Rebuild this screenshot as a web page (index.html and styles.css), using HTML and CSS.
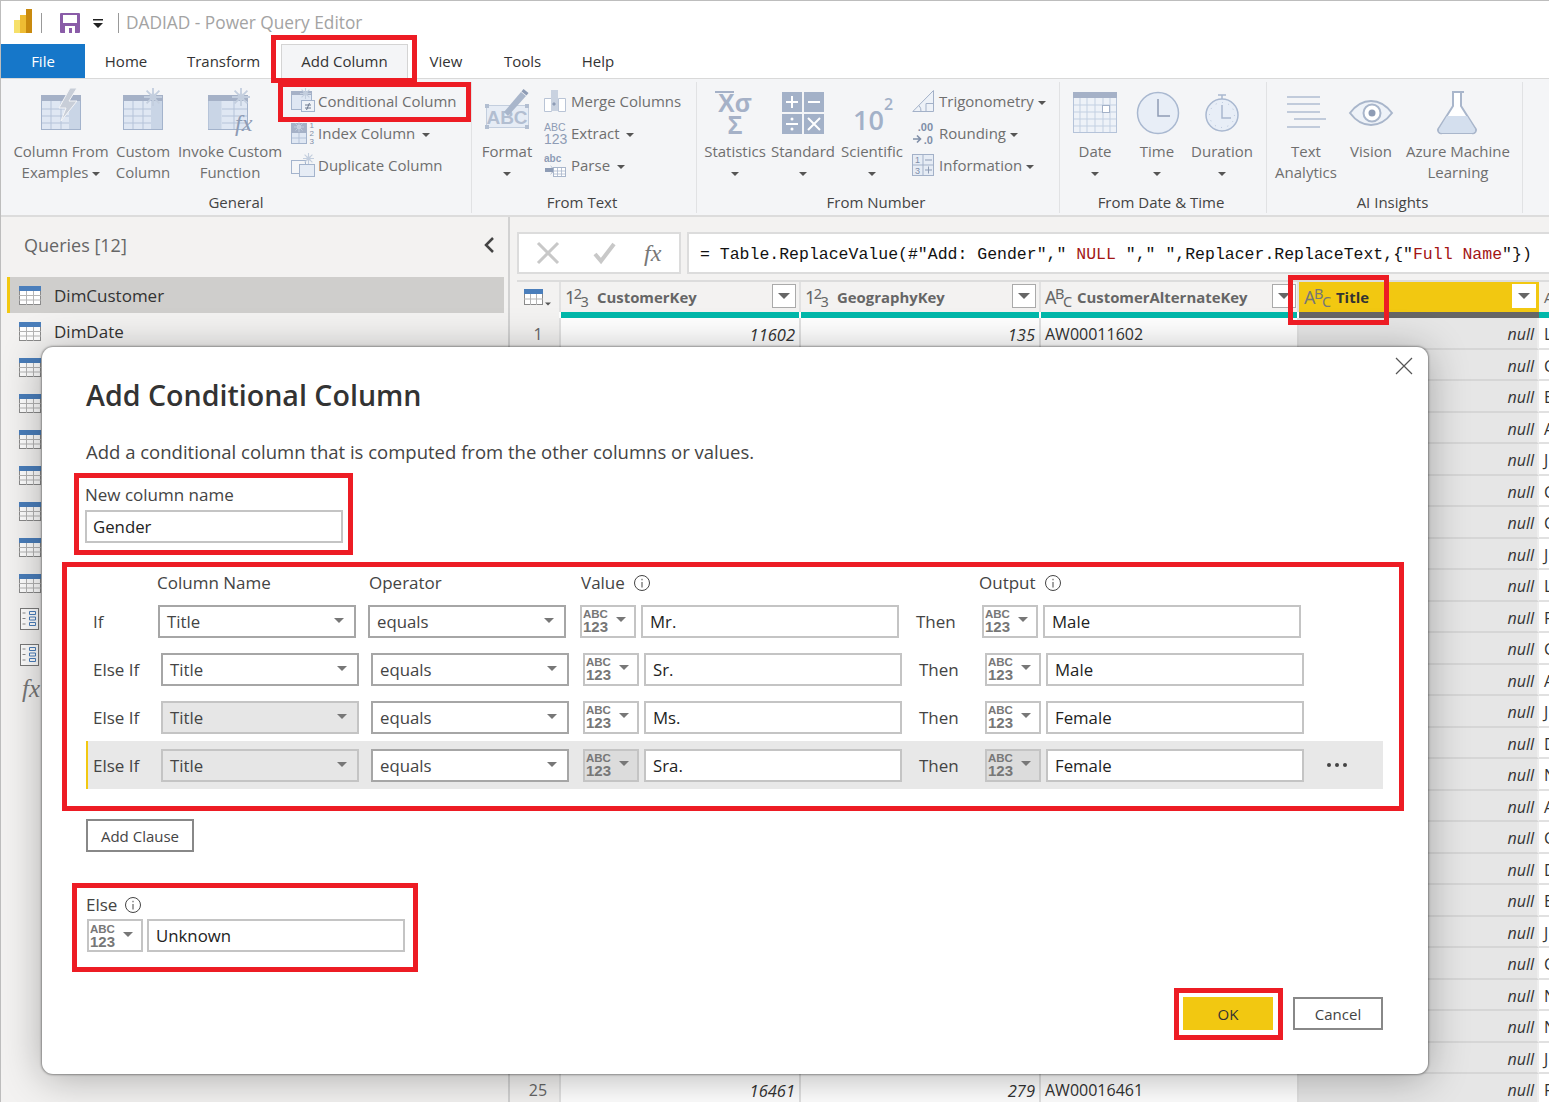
FILE: index.html
```html
<!DOCTYPE html>
<html lang="en">
<head>
  <meta charset="UTF-8" />
  <title>DADIAD - Power Query Editor</title>
  <link rel="stylesheet" href="styles.css">
</head>
<body>
<svg class="defs" width="0" height="0">
  <defs>
    <symbol id="star" viewBox="0 0 18 18">
      <circle cx="9" cy="9" r="3.2" fill="#fff" stroke="#c3cede"/>
      <path d="M9 0v18M0 9h18M2.6 2.6l12.8 12.8M15.4 2.6L2.6 15.4" stroke="#c3cede" stroke-width="1.8"/>
    </symbol>
    <symbol id="query-table" viewBox="0 0 22 19">
      <rect x=".5" y=".5" width="21" height="18" fill="#fff" stroke="#8a8a8a"/>
      <rect width="22" height="5" fill="#4a7ebb"/>
      <path d="M0 9.5h22M0 14h22M7.5 5v14M14.5 5v14" stroke="#b5b5b5"/>
    </symbol>
    <symbol id="query-param" viewBox="0 0 19 22">
      <rect x=".5" y=".5" width="18" height="21" fill="#fff" stroke="#7a7a7a"/>
      <path d="M2.500 5h3M2.500 10.500h3M2.500 16h3" stroke="#8a8a8a"/>
      <path d="M9.500 3.500h6v3h-6zM9.500 9h6v3h-6zM9.500 14.500h6v3h-6z" fill="#fff" stroke="#4a7ebb"/>
    </symbol>
    <symbol id="info" viewBox="0 0 18 18">
      <circle cx="9" cy="9" r="7.500" fill="none" stroke="#444"/>
      <path d="M9 8v5.500M9 4.800v1.500" stroke="#444"/>
    </symbol>
  </defs>
</svg>

<div class="page">
  <div class="titlebar">
    <svg class="logo" width="18" height="24" viewBox="0 0 18 24">
      <rect y="11" width="7" height="13" fill="#f6e06a"/>
      <rect x="6" y="6" width="7" height="18" fill="#eebc33"/>
      <rect x="12" width="6" height="24" fill="#c98a0e"/>
    </svg>
    <span class="title-sep"></span>
    <svg class="save" width="20" height="20" viewBox="0 0 20 20">
      <path d="M1 0h18a1 1 0 0 1 1 1v18a1 1 0 0 1-1 1H1a1 1 0 0 1-1-1V1a1 1 0 0 1 1-1z" fill="#8a5ca8"/>
      <rect x="3" y="2" width="14" height="8" fill="#fff"/>
      <rect x="5" y="13" width="10" height="7" fill="#fff"/>
      <rect x="9" y="15" width="3" height="5" fill="#8a5ca8"/>
    </svg>
    <svg class="qat-drop" width="10" height="10" viewBox="0 0 10 10"><path d="M0 0h10v1.500H0zM0 4h10L5 9z" fill="#222"/></svg>
    <span class="title-sep title-sep-2"></span>
    <span class="app-title">DADIAD - Power Query Editor</span>
  </div>

  <div class="tabs">
    <span class="tab tab-file">File</span>
    <span class="tab tab-home">Home</span>
    <span class="tab tab-transform">Transform</span>
    <span class="tab tab-active">Add Column</span>
    <span class="tab tab-view">View</span>
    <span class="tab tab-tools">Tools</span>
    <span class="tab tab-help">Help</span>
  </div>

  <div class="ribbon">
    <div class="group group-general">
      <div class="group-items">
        <div class="big-btn w-examples">
          <svg class="big-icon" width="48" height="48" viewBox="0 0 48 48">
            <rect x="4.500" y="9.500" width="39" height="34" fill="#dfe7f3" stroke="#a3b3cc"/>
            <rect x="32" y="10" width="11" height="33" fill="#c9d5e6"/>
            <rect x="4" y="9" width="40" height="6" fill="#a5b1c7"/>
            <path d="M5 23h27M5 30h27M5 37h27M14 15v28M24 15v28" stroke="#b5c3d9"/>
            <path d="M33 2L22 22h7l-5 13 16-20h-8l8-13z" fill="#c8ced8" stroke="#f4f5f7"/>
          </svg>
          <span class="big-label">Column From<br>Examples <i class="caret"></i></span>
        </div>
        <div class="big-btn w-custom">
          <svg class="big-icon" width="48" height="48" viewBox="0 0 48 48">
            <rect x="4.500" y="9.500" width="39" height="34" fill="#dfe7f3" stroke="#a3b3cc"/>
            <rect x="32" y="10" width="11" height="33" fill="#c9d5e6"/>
            <rect x="4" y="9" width="40" height="6" fill="#a5b1c7"/>
            <path d="M5 23h27M5 30h27M5 37h27M14 15v28M24 15v28" stroke="#b5c3d9"/>
            <use href="#star" x="25" y="2" width="18" height="18"/>
          </svg>
          <span class="big-label">Custom<br>Column</span>
        </div>
        <div class="big-btn w-invoke">
          <svg class="big-icon" width="48" height="48" viewBox="0 0 48 48">
            <rect x="2.500" y="9.500" width="39" height="34" fill="#dfe7f3" stroke="#a3b3cc"/>
            <rect x="2.500" y="15" width="13" height="28" fill="#c9d5e6"/>
            <rect x="2" y="9" width="40" height="6" fill="#a5b1c7"/>
            <path d="M16 23h25M16 30h25M16 37h25M28 15v28" stroke="#b5c3d9"/>
            <use href="#star" x="26" y="2" width="18" height="18"/>
            <text class="fx-glyph" x="29" y="45">fx</text>
          </svg>
          <span class="big-label">Invoke Custom<br>Function</span>
        </div>
        <div class="small-col small-general">
          <div class="small-btn">
            <svg width="24" height="26" viewBox="0 0 24 26">
              <rect x=".5" y="3.500" width="20" height="18" fill="#dfe7f3" stroke="#a3b3cc"/>
              <rect y="3" width="21" height="4" fill="#a5b1c7"/>
              <use href="#star" x="9" y="0" width="11" height="11"/>
              <rect x="10.500" y="12.500" width="13" height="11" fill="#eef2f8" stroke="#a3b3cc"/>
              <path d="M14 17h6M14 20h6M18.500 15l-3 7" stroke="#6d7a90"/>
            </svg>
            <span>Conditional Column</span>
          </div>
          <div class="small-btn">
            <svg width="24" height="26" viewBox="0 0 24 26">
              <rect x=".5" y="3.500" width="15" height="20" fill="#dfe7f3" stroke="#a3b3cc"/>
              <rect y="3" width="16" height="10" fill="#a5b1c7"/>
              <use href="#star" x="3" y="2" width="10" height="10"/>
              <path d="M1 18h14M8 13v10" stroke="#b5c3d9"/>
              <text class="index-num" x="18.500" y="8">1</text>
              <text class="index-num" x="18.500" y="16">2</text>
              <text class="index-num" x="18.500" y="24">3</text>
            </svg>
            <span>Index Column <i class="caret caret-gap"></i></span>
          </div>
          <div class="small-btn">
            <svg width="24" height="26" viewBox="0 0 24 26">
              <rect x=".5" y="8.500" width="14" height="13" fill="none" stroke="#a3b3cc"/>
              <rect x="8.500" y="12.500" width="15" height="12" fill="#e6ecf5" stroke="#a3b3cc"/>
              <use href="#star" x="12" y="1" width="11" height="11"/>
            </svg>
            <span>Duplicate Column</span>
          </div>
        </div>
      </div>
      <div class="group-label">General</div>
    </div>

    <div class="group group-text">
      <div class="group-items">
        <div class="big-btn w-format">
          <svg class="big-icon" width="48" height="48" viewBox="0 0 48 48">
            <rect x="3.500" y="19.500" width="42" height="22" fill="#e6ecf5" stroke="#c3cede"/>
            <path d="M2 18h4v4H2zM42 18h4v4h-4zM2 39h4v4H2zM42 39h4v4h-4z" fill="#b2bed1"/>
            <text class="format-abc" x="24" y="38">ABC</text>
            <path d="M21 26L38 6l5 4-18 20z" fill="#a9b6cb"/>
            <path d="M38.500 5.500l2-2.500 5 4-2 2.500z" fill="#8e9cb5"/>
          </svg>
          <span class="big-label">Format<br><i class="caret"></i></span>
        </div>
        <div class="small-col small-text">
          <div class="small-btn">
            <svg width="22" height="24" viewBox="0 0 22 24">
              <path d="M.5 9.500h7v13h-7zM14.500 9.500h7v13h-7z" fill="#fff" stroke="#b9c4d6"/>
              <rect x="7" y="1" width="7" height="21" fill="#c9d2e0"/>
              <path d="M8 15l2 2 2-2-2-2z" fill="#8e9cb5"/>
            </svg>
            <span>Merge Columns</span>
          </div>
          <div class="small-btn">
            <span class="type-glyph ribbon-abc"><b>ABC</b><b class="num">123</b></span>
            <span>Extract <i class="caret caret-gap"></i></span>
          </div>
          <div class="small-btn">
            <svg width="22" height="24" viewBox="0 0 22 24">
              <text class="parse-abc" x="0" y="9">abc</text>
              <path d="M1 15h7l-2-3 5 5-5 5 2-3H1z" fill="#8e9cb5"/>
              <rect x="9.500" y="14.500" width="12" height="9" fill="#fff" stroke="#a9b6cb"/>
              <path d="M9.500 18h12M9.500 21h12M13.500 14.500v9M17.500 14.500v9" stroke="#a9b6cb" stroke-width=".8"/>
            </svg>
            <span>Parse <i class="caret caret-gap"></i></span>
          </div>
        </div>
      </div>
      <div class="group-label">From Text</div>
    </div>

    <div class="group group-number">
      <div class="group-items">
        <div class="big-btn w-stats">
          <svg class="big-icon" width="48" height="48" viewBox="0 0 48 48">
            <path d="M4 6h19" stroke="#a5b1c7" stroke-width="2"/>
            <text class="stat-glyph" x="24" y="26">Xσ</text>
            <text class="stat-glyph" x="24" y="48">Σ</text>
          </svg>
          <span class="big-label">Statistics<br><i class="caret"></i></span>
        </div>
        <div class="big-btn w-standard">
          <svg class="big-icon" width="48" height="48" viewBox="0 0 48 48">
            <path d="M3 6h20v20H3zM25 6h20v20H25zM3 28h20v20H3zM25 28h20v20H25z" fill="#a3b1c8"/>
            <path d="M7 16h12M13 10v12M29 16h12M7 38h12M29 32l12 12M41 32L29 44" stroke="#fff" stroke-width="2"/>
            <circle cx="13" cy="33" r="1.500" fill="#fff"/><circle cx="13" cy="43" r="1.500" fill="#fff"/>
          </svg>
          <span class="big-label">Standard<br><i class="caret"></i></span>
        </div>
        <div class="big-btn w-sci">
          <svg class="big-icon" width="48" height="48" viewBox="0 0 48 48">
            <text class="sci-ten" x="5" y="44">10</text>
            <text class="sci-two" x="36" y="24">2</text>
          </svg>
          <span class="big-label">Scientific<br><i class="caret"></i></span>
        </div>
        <div class="small-col small-number">
          <div class="small-btn">
            <svg width="22" height="24" viewBox="0 0 22 24">
              <path d="M21.500 1.500v21H.8z" fill="#eef2f8" stroke="#a3b1c8"/>
              <path d="M14 22.500v-8h7.500M9 22.500a8 8 0 0 0-2-6" fill="none" stroke="#a3b1c8"/>
            </svg>
            <span>Trigonometry <i class="caret"></i></span>
          </div>
          <div class="small-btn">
            <svg width="22" height="24" viewBox="0 0 22 24">
              <text class="round-num" x="21" y="10">.00</text>
              <text class="round-num" x="21" y="23">.0</text>
              <path d="M1 18h7M5 14.500l3.500 3.500L5 21.500" fill="none" stroke="#7f8ea8" stroke-width="1.600"/>
            </svg>
            <span>Rounding <i class="caret"></i></span>
          </div>
          <div class="small-btn">
            <svg width="22" height="24" viewBox="0 0 22 24">
              <rect x=".5" y="1.500" width="21" height="21" fill="#e6ecf5" stroke="#a3b1c8"/>
              <path d="M11 1.500v21M.5 12h21" stroke="#a3b1c8"/>
              <text class="info-num" x="5.500" y="10">1</text>
              <text class="info-num" x="5.500" y="21">3</text>
              <path d="M13 7h7M13 17h7M16.500 13.500v7" stroke="#8e9cb5"/>
            </svg>
            <span>Information <i class="caret"></i></span>
          </div>
        </div>
      </div>
      <div class="group-label">From Number</div>
    </div>

    <div class="group group-date">
      <div class="group-items">
        <div class="big-btn w-date">
          <svg class="big-icon" width="48" height="48" viewBox="0 0 48 48">
            <rect x="2.500" y="6.500" width="43" height="40" fill="#eef2f8" stroke="#b5c3d9"/>
            <rect x="2" y="6" width="44" height="6" fill="#a5b1c7"/>
            <path d="M9 12v34M16 12v34M24 12v34M32 12v34M39 12v34M3 19h42M3 26h42M3 33h42M3 40h42" stroke="#c3d0e2"/>
            <rect x="31.500" y="19.500" width="7" height="7" fill="#fff" stroke="#a3b1c8"/>
          </svg>
          <span class="big-label">Date<br><i class="caret"></i></span>
        </div>
        <div class="big-btn w-time">
          <svg class="big-icon" width="48" height="48" viewBox="0 0 48 48">
            <circle cx="25" cy="27" r="20.500" fill="#e8eef7" stroke="#a9b8d0" stroke-width="1.500"/>
            <path d="M25 13v17h12" fill="none" stroke="#8e9cb5" stroke-width="1.500"/>
          </svg>
          <span class="big-label">Time<br><i class="caret"></i></span>
        </div>
        <div class="big-btn w-duration">
          <svg class="big-icon" width="48" height="48" viewBox="0 0 48 48">
            <circle cx="24" cy="29" r="16" fill="#e8eef7" stroke="#a9b8d0" stroke-width="1.500"/>
            <path d="M20 9h8M24 9v4M24 19v13h9" fill="none" stroke="#a9b8d0" stroke-width="1.500"/>
            <circle cx="24" cy="29" r="12.500" fill="none" stroke="#b5c3d9" stroke-dasharray="1 5.500"/>
          </svg>
          <span class="big-label">Duration<br><i class="caret"></i></span>
        </div>
      </div>
      <div class="group-label">From Date &amp; Time</div>
    </div>

    <div class="group group-ai">
      <div class="group-items">
        <div class="big-btn w-analytics">
          <svg class="big-icon" width="48" height="48" viewBox="0 0 48 48">
            <path d="M5 11h33M5 18h33M5 26h33M12 33h32M5 41h33" fill="none" stroke="#b0bdd2" stroke-width="1.500"/>
          </svg>
          <span class="big-label">Text<br>Analytics</span>
        </div>
        <div class="big-btn w-vision">
          <svg class="big-icon" width="48" height="48" viewBox="0 0 48 48">
            <path d="M3 27c6-8 13-12 21-12s15 4 21 12c-6 8-13 12-21 12s-15-4-21-12z" fill="#eef2f8" stroke="#a9b6cb" stroke-width="2"/>
            <circle cx="25" cy="27" r="8.500" fill="#fff" stroke="#a9b6cb" stroke-width="2"/>
            <circle cx="25" cy="27" r="3.500" fill="#8e9cb5"/>
          </svg>
          <span class="big-label">Vision</span>
        </div>
        <div class="big-btn w-azure">
          <svg class="big-icon" width="48" height="48" viewBox="0 0 48 48">
            <path d="M18 6h12M19 6v14L5 42a3 3 0 0 0 3 5h30a3 3 0 0 0 3-5L27 20V6" fill="#fff" stroke="#a9b6cb" stroke-width="2"/>
            <path d="M13 30h20l8 13a3 3 0 0 1-3 4H8a3 3 0 0 1-3-4z" fill="#d4dfee"/>
          </svg>
          <span class="big-label">Azure Machine<br>Learning</span>
        </div>
      </div>
      <div class="group-label">AI Insights</div>
    </div>
  </div>

  <div class="main">
    <div class="queries">
      <div class="queries-head">
        <span>Queries [12]</span>
        <svg width="12" height="16" viewBox="0 0 12 16"><path d="M10 1L3 8l7 7" fill="none" stroke="#444" stroke-width="2.500"/></svg>
      </div>
      <div class="query query-selected"><svg width="22" height="19"><use href="#query-table"/></svg><span>DimCustomer</span></div>
      <div class="query"><svg width="22" height="19"><use href="#query-table"/></svg><span>DimDate</span></div>
      <div class="query"><svg width="22" height="19"><use href="#query-table"/></svg></div>
      <div class="query"><svg width="22" height="19"><use href="#query-table"/></svg></div>
      <div class="query"><svg width="22" height="19"><use href="#query-table"/></svg></div>
      <div class="query"><svg width="22" height="19"><use href="#query-table"/></svg></div>
      <div class="query"><svg width="22" height="19"><use href="#query-table"/></svg></div>
      <div class="query"><svg width="22" height="19"><use href="#query-table"/></svg></div>
      <div class="query"><svg width="22" height="19"><use href="#query-table"/></svg></div>
      <div class="query query-param"><svg width="19" height="22"><use href="#query-param"/></svg></div>
      <div class="query query-param"><svg width="19" height="22"><use href="#query-param"/></svg></div>
      <div class="query query-fx"><span>fx</span></div>
    </div>

    <div class="data">
      <div class="formula-row">
        <div class="formula-btns">
          <svg width="24" height="24" viewBox="0 0 24 24"><path d="M2 2l20 20M22 2L2 22" stroke="#c8c8c8" stroke-width="3"/></svg>
          <svg width="24" height="24" viewBox="0 0 24 24"><path d="M3 13l6 7L22 3" fill="none" stroke="#c8c8c8" stroke-width="4"/></svg>
          <span class="formula-fx">fx</span>
        </div>
        <div class="formula">= Table.ReplaceValue(#"Add: Gender","<em> NULL </em>"," ",Replacer.ReplaceText,{"<em>Full Name</em>"})</div>
      </div>

      <div class="grid-head">
        <div class="col-head corner">
          <svg width="27" height="17" viewBox="0 0 27 17">
            <rect x=".5" y=".5" width="18" height="15" fill="#fff" stroke="#8a8a8a"/>
            <rect width="19" height="5" fill="#4a7ebb"/>
            <path d="M0 10h19M6.500 5v11M12.500 5v11" stroke="#b5b5b5"/>
            <path d="M21 13.500h6l-3 3z" fill="#555"/>
          </svg>
        </div>
        <div class="col-head">
          <span class="col-type">1<sup>2</sup><sub>3</sub></span><b>CustomerKey</b><span class="col-filter"><i class="caret"></i></span>
        </div>
        <div class="col-head">
          <span class="col-type">1<sup>2</sup><sub>3</sub></span><b>GeographyKey</b><span class="col-filter"><i class="caret"></i></span>
        </div>
        <div class="col-head col-alt">
          <span class="col-type">A<sup>B</sup><sub>C</sub></span><b>CustomerAlternateKey</b><span class="col-filter"><i class="caret"></i></span>
        </div>
        <div class="col-head col-selected">
          <span class="col-type">A<sup>B</sup><sub>C</sub></span><b>Title</b><span class="col-filter"><i class="caret"></i></span>
        </div>
        <div class="col-head col-last">A</div>
      </div>
      <div class="quality">
        <span></span><span class="teal"></span><span class="teal"></span><span class="teal"></span><span class="dark"></span><span class="teal"></span>
      </div>

      <div class="row"><span class="num">1</span><span class="n">11602</span><span class="n">135</span><span class="t">AW00011602</span><span class="n shaded">null</span><span class="t">L</span></div>
      <div class="row"><span class="num"></span><span class="n"></span><span class="n"></span><span class="t"></span><span class="n shaded">null</span><span class="t">C</span></div>
      <div class="row"><span class="num"></span><span class="n"></span><span class="n"></span><span class="t"></span><span class="n shaded">null</span><span class="t">E</span></div>
      <div class="row"><span class="num"></span><span class="n"></span><span class="n"></span><span class="t"></span><span class="n shaded">null</span><span class="t">A</span></div>
      <div class="row"><span class="num"></span><span class="n"></span><span class="n"></span><span class="t"></span><span class="n shaded">null</span><span class="t">J</span></div>
      <div class="row"><span class="num"></span><span class="n"></span><span class="n"></span><span class="t"></span><span class="n shaded">null</span><span class="t">C</span></div>
      <div class="row"><span class="num"></span><span class="n"></span><span class="n"></span><span class="t"></span><span class="n shaded">null</span><span class="t">C</span></div>
      <div class="row"><span class="num"></span><span class="n"></span><span class="n"></span><span class="t"></span><span class="n shaded">null</span><span class="t">J</span></div>
      <div class="row"><span class="num"></span><span class="n"></span><span class="n"></span><span class="t"></span><span class="n shaded">null</span><span class="t">L</span></div>
      <div class="row"><span class="num"></span><span class="n"></span><span class="n"></span><span class="t"></span><span class="n shaded">null</span><span class="t">F</span></div>
      <div class="row"><span class="num"></span><span class="n"></span><span class="n"></span><span class="t"></span><span class="n shaded">null</span><span class="t">C</span></div>
      <div class="row"><span class="num"></span><span class="n"></span><span class="n"></span><span class="t"></span><span class="n shaded">null</span><span class="t">A</span></div>
      <div class="row"><span class="num"></span><span class="n"></span><span class="n"></span><span class="t"></span><span class="n shaded">null</span><span class="t">J</span></div>
      <div class="row"><span class="num"></span><span class="n"></span><span class="n"></span><span class="t"></span><span class="n shaded">null</span><span class="t">D</span></div>
      <div class="row"><span class="num"></span><span class="n"></span><span class="n"></span><span class="t"></span><span class="n shaded">null</span><span class="t">N</span></div>
      <div class="row"><span class="num"></span><span class="n"></span><span class="n"></span><span class="t"></span><span class="n shaded">null</span><span class="t">A</span></div>
      <div class="row"><span class="num"></span><span class="n"></span><span class="n"></span><span class="t"></span><span class="n shaded">null</span><span class="t">C</span></div>
      <div class="row"><span class="num"></span><span class="n"></span><span class="n"></span><span class="t"></span><span class="n shaded">null</span><span class="t">D</span></div>
      <div class="row"><span class="num"></span><span class="n"></span><span class="n"></span><span class="t"></span><span class="n shaded">null</span><span class="t">E</span></div>
      <div class="row"><span class="num"></span><span class="n"></span><span class="n"></span><span class="t"></span><span class="n shaded">null</span><span class="t">J</span></div>
      <div class="row"><span class="num"></span><span class="n"></span><span class="n"></span><span class="t"></span><span class="n shaded">null</span><span class="t">C</span></div>
      <div class="row"><span class="num"></span><span class="n"></span><span class="n"></span><span class="t"></span><span class="n shaded">null</span><span class="t">N</span></div>
      <div class="row"><span class="num"></span><span class="n"></span><span class="n"></span><span class="t"></span><span class="n shaded">null</span><span class="t">N</span></div>
      <div class="row"><span class="num"></span><span class="n"></span><span class="n"></span><span class="t"></span><span class="n shaded">null</span><span class="t">J</span></div>
      <div class="row"><span class="num">25</span><span class="n">16461</span><span class="n">279</span><span class="t">AW00016461</span><span class="n shaded">null</span><span class="t">F</span></div>
    </div>
  </div>

  <div class="dialog">
    <svg class="dialog-close" width="18" height="18" viewBox="0 0 18 18"><path d="M1 1l16 16M17 1L1 17" stroke="#555" stroke-width="1.200"/></svg>
    <h1>Add Conditional Column</h1>
    <p class="intro">Add a conditional column that is computed from the other columns or values.</p>

    <label class="name-label">New column name</label>
    <div class="field name-field">Gender</div>

    <div class="clause-head">
      <span class="h-column">Column Name</span>
      <span class="h-operator">Operator</span>
      <span class="h-value">Value <svg width="18" height="18"><use href="#info"/></svg></span>
      <span class="h-output">Output <svg width="18" height="18"><use href="#info"/></svg></span>
    </div>

    <div class="clause clause-first">
      <span class="clause-label">If</span>
      <div class="select select-col">Title<i class="caret"></i></div>
      <div class="select select-op">equals<i class="caret"></i></div>
      <div class="type-btn"><span class="type-glyph"><b>ABC</b><b class="num">123</b></span><i class="caret"></i></div>
      <div class="field value">Mr.</div>
      <span class="then">Then</span>
      <div class="type-btn"><span class="type-glyph"><b>ABC</b><b class="num">123</b></span><i class="caret"></i></div>
      <div class="field value">Male</div>
    </div>
    <div class="clause">
      <span class="clause-label">Else If</span>
      <div class="select select-col">Title<i class="caret"></i></div>
      <div class="select select-op">equals<i class="caret"></i></div>
      <div class="type-btn"><span class="type-glyph"><b>ABC</b><b class="num">123</b></span><i class="caret"></i></div>
      <div class="field value">Sr.</div>
      <span class="then">Then</span>
      <div class="type-btn"><span class="type-glyph"><b>ABC</b><b class="num">123</b></span><i class="caret"></i></div>
      <div class="field value">Male</div>
    </div>
    <div class="clause">
      <span class="clause-label">Else If</span>
      <div class="select select-col disabled">Title<i class="caret"></i></div>
      <div class="select select-op">equals<i class="caret"></i></div>
      <div class="type-btn"><span class="type-glyph"><b>ABC</b><b class="num">123</b></span><i class="caret"></i></div>
      <div class="field value">Ms.</div>
      <span class="then">Then</span>
      <div class="type-btn"><span class="type-glyph"><b>ABC</b><b class="num">123</b></span><i class="caret"></i></div>
      <div class="field value">Female</div>
    </div>
    <div class="clause clause-hover">
      <span class="clause-label">Else If</span>
      <div class="select select-col disabled">Title<i class="caret"></i></div>
      <div class="select select-op">equals<i class="caret"></i></div>
      <div class="type-btn disabled"><span class="type-glyph"><b>ABC</b><b class="num">123</b></span><i class="caret"></i></div>
      <div class="field value">Sra.</div>
      <span class="then">Then</span>
      <div class="type-btn disabled"><span class="type-glyph"><b>ABC</b><b class="num">123</b></span><i class="caret"></i></div>
      <div class="field value">Female</div>
      <span class="more"><i></i><i></i><i></i></span>
    </div>

    <button class="btn add-clause">Add Clause</button>

    <div class="else-label">Else <svg width="18" height="18"><use href="#info"/></svg></div>
    <div class="else-row">
      <div class="type-btn"><span class="type-glyph"><b>ABC</b><b class="num">123</b></span><i class="caret"></i></div>
      <div class="field value">Unknown</div>
    </div>

    <div class="dialog-actions">
      <button class="btn btn-ok">OK</button>
      <button class="btn">Cancel</button>
    </div>
  </div>

  <!-- red call-outs drawn over the screenshot -->
  <div class="mark mark-tab"></div>
  <div class="mark mark-cond"></div>
  <div class="mark mark-title"></div>
  <div class="mark mark-name"></div>
  <div class="mark mark-clauses"></div>
  <div class="mark mark-else"></div>
  <div class="mark mark-ok"></div>
</div>
</body>
</html>
```

FILE: styles.css
```css
html, body {
  margin: 0;
  padding: 0;
}

body {
  font-family: "Open Sans", "Noto Sans", sans-serif;
  background: #fff;
  color: #333;
}

.defs {
  position: absolute;
}

.page {
  position: relative;
  width: 1549px;
  height: 1102px;
  overflow: hidden;
  box-sizing: border-box;
  border-top: 1px solid #bdbdbd;
  border-left: 1px solid #bdbdbd;
}

/* title bar */
.titlebar {
  height: 43px;
  display: flex;
  align-items: center;
  background: #fff;
}

.logo {
  margin-left: 13px;
  margin-top: -3px;
}

.title-sep {
  width: 1px;
  height: 20px;
  background: #999;
  margin-left: 9px;
}

.save {
  margin-left: 18px;
}

.qat-drop {
  margin-left: 13px;
  margin-top: 3px;
}

.title-sep-2 {
  margin-left: 15px;
  height: 20px;
}

.app-title {
  margin-left: 7px;
  font-size: 17.300px;
  color: #a3a3a3;
}

/* tabs */
.tabs {
  height: 35px;
  display: flex;
  align-items: center;
  border-bottom: 1px solid #d9d9d9;
  box-sizing: border-box;
  font-size: 15px;
  color: #333;
}

.tab {
  height: 100%;
  display: flex;
  align-items: center;
  justify-content: center;
  box-sizing: border-box;
  padding-bottom: 1px;
}

.tab-file {
  width: 84px;
  background: #1677c9;
  color: #fff;
}

.tab-home { margin-left: 20px; width: 42px; }
.tab-transform { margin-left: 41px; width: 71px; }

.tab-active {
  margin-left: 22px;
  width: 127px;
  height: 36px;
  margin-bottom: -1px;
  background: #f4f5f7;
  border: 1px solid #d4d4d4;
  border-bottom: 0;
  padding-bottom: 2px;
}

.tab-view { margin-left: 21px; width: 34px; }
.tab-tools { margin-left: 42px; width: 35px; }
.tab-help { margin-left: 42px; width: 32px; }

/* ribbon */
.ribbon {
  height: 138px;
  display: flex;
  background: #f4f5f7;
  border-bottom: 2px solid #dcdcdc;
  box-sizing: border-box;
  color: #6f6f6f;
  font-size: 15px;
}

.group {
  display: flex;
  flex-direction: column;
  position: relative;
  box-sizing: border-box;
  border-right: 1px solid #e1e2e4;
  height: 131px;
  margin-top: 3px;
}

.group-general { width: 471px; }
.group-text { width: 225px; }
.group-number { width: 363px; }
.group-date { width: 207px; }
.group-ai { width: 256px; }

.group-items {
  display: flex;
  height: 109px;
}

.group-label {
  text-align: center;
  color: #444;
  line-height: 22px;
  font-size: 15px;
  padding-right: 4px;
}

.group-general .group-label {
  padding-right: 0;
}

.big-btn {
  display: flex;
  flex-direction: column;
  align-items: center;
  padding-top: 4px;
  flex: none;
}

.big-icon {
  overflow: visible;
}

.big-label {
  margin-top: 7px;
  text-align: center;
  line-height: 21px;
  white-space: nowrap;
}

.caret {
  display: inline-block;
  width: 0;
  height: 0;
  border-left: 4px solid transparent;
  border-right: 4px solid transparent;
  border-top: 4.500px solid #555;
  vertical-align: middle;
}

.caret-gap {
  margin-left: 3px;
}

.w-examples { width: 120px; }
.w-custom { width: 44px; }
.w-invoke { width: 104px; margin-left: 13px; }

.w-format { width: 60px; margin-left: 5px; }
.w-stats { width: 62px; margin-left: 7px; }
.w-standard { width: 68px; margin-left: 3px; }
.w-sci { width: 66px; margin-left: 2px; }
.w-date { width: 60px; margin-left: 5px; }
.w-time { width: 60px; margin-left: 2px; }
.w-duration { width: 66px; margin-left: 2px; }
.w-analytics { width: 76px; margin-left: 1px; }
.w-vision { width: 54px; }
.w-azure { width: 110px; margin-left: 5px; }

.small-col {
  display: flex;
  flex-direction: column;
  padding-top: 3px;
}

.small-general { margin-left: 9px; }
.small-text { margin-left: 7px; }
.small-number { margin-left: 7px; }

.small-btn {
  height: 32px;
  display: flex;
  align-items: center;
  gap: 5px;
  white-space: nowrap;
}

.small-general .small-btn {
  gap: 3px;
}

.fx-glyph {
  font: italic 24px "Liberation Serif", serif;
  fill: #8e9cb5;
}

.index-num {
  font: 8px "Liberation Sans", sans-serif;
  fill: #7f8ea8;
}

.format-abc {
  font: bold 19px "Liberation Sans", sans-serif;
  fill: #b2bed1;
  text-anchor: middle;
}

.parse-abc {
  font: bold 10px "Liberation Sans", sans-serif;
  fill: #8e9cb5;
}

.stat-glyph {
  font: bold 25px "Liberation Sans", sans-serif;
  fill: #a5b1c7;
  text-anchor: middle;
}

.sci-ten {
  font: 600 27px "Open Sans", sans-serif;
  fill: #a3b1c8;
}

.sci-two {
  font: 600 16px "Open Sans", sans-serif;
  fill: #a3b1c8;
}

.round-num {
  font: bold 11px "Liberation Sans", sans-serif;
  fill: #7f8ea8;
  text-anchor: end;
}

.info-num {
  font: 9px "Liberation Sans", sans-serif;
  fill: #7f8ea8;
  text-anchor: middle;
}

/* abc / 123 type glyph */
.type-glyph {
  display: inline-flex;
  flex-direction: column;
  font-family: "Liberation Sans", sans-serif;
  color: #777;
  line-height: 12px;
  font-size: 11.500px;
}

.type-glyph b {
  display: block;
}

.type-glyph .num {
  font-size: 15px;
  line-height: 13px;
}

.ribbon-abc {
  width: 22px;
  color: #8e9cb5;
}

.ribbon-abc b {
  font-size: 10.500px;
  font-weight: 400;
}

.ribbon-abc .num {
  font-size: 14px;
  font-weight: 400;
}

/* main area */
.main {
  display: flex;
  height: 885px;
  background: #f3f2f1;
}

.queries {
  width: 507px;
  flex: none;
  border-right: 2px solid #d2d2d2;
  box-sizing: content-box;
}

.queries-head {
  height: 60px;
  box-sizing: border-box;
  display: flex;
  align-items: center;
  justify-content: space-between;
  padding: 0 13px 4px 23px;
  font-size: 18px;
  color: #666;
}

.query {
  height: 36px;
  margin: 0 4px 0 6px;
  padding-left: 12px;
  display: flex;
  align-items: center;
  gap: 13px;
  font-size: 17px;
  color: #333;
}

.query-param {
  padding-left: 13px;
}

.query-selected {
  background: #cfcecc;
  border-left: 3px solid #f2c811;
  padding-left: 9px;
}

.query-fx {
  padding-left: 15px;
  margin-top: -2px;
  font: italic 25px "Liberation Serif", serif;
  color: #777;
}

.data {
  flex: 1;
  min-width: 0;
  padding: 15px 0 0 7px;
  overflow: hidden;
}

.formula-row {
  display: flex;
  gap: 6px;
  height: 42px;
}

.formula-btns {
  width: 164px;
  box-sizing: border-box;
  background: #fff;
  border: 2px solid #dcdcdc;
  display: flex;
  align-items: center;
  gap: 34px;
  padding-left: 17px;
}

.formula-btns svg + svg {
  margin-left: -2px;
}

.formula-fx {
  margin-left: -6px;
  font: italic 24px "Liberation Serif", serif;
  color: #777;
}

.formula {
  flex: 1;
  background: #fff;
  border: 2px solid #dcdcdc;
  border-right: 0;
  padding: 2px 0 0 11px;
  line-height: 38px;
  font-family: "Liberation Mono", monospace;
  font-size: 16.500px;
  white-space: pre;
  color: #111;
}

.formula em {
  font-style: normal;
  color: #a31515;
}

.grid-head,
.quality,
.row {
  display: grid;
  grid-template-columns: 44px 240px 240px 258px 240px 40px;
}

.grid-head {
  margin-top: 6px;
  height: 32px;
  box-sizing: border-box;
  background: #f3f2f1;
  border-top: 2px solid #dcdcdc;
}

.col-head {
  position: relative;
  display: flex;
  align-items: center;
  box-sizing: border-box;
  border-right: 2px solid #e1e1e1;
  font-size: 14.900px;
  color: #666;
  padding-left: 4px;
}

.col-head b {
  margin-left: 10px;
  font-weight: 700;
}

.corner {
  padding-left: 7px;
}

.col-type {
  font-family: "Noto Sans", sans-serif;
  font-size: 18px;
  color: #666;
  width: 22px;
  white-space: nowrap;
  letter-spacing: -1.500px;
}

.col-type sup,
.col-type sub {
  font-size: 14.500px;
  line-height: 0;
}

.col-type sub {
  vertical-align: -3px;
}

.col-type sup {
  vertical-align: 5px;
}

.col-filter {
  position: absolute;
  right: 3px;
  top: 2px;
  width: 24px;
  height: 24px;
  box-sizing: border-box;
  background: #fff;
  border: 1px solid #aaa;
  display: flex;
  align-items: center;
  justify-content: center;
}

.col-alt .col-filter {
  right: 1px;
}

.col-filter .caret {
  border-left-width: 6px;
  border-right-width: 6px;
  border-top-width: 6px;
  border-top-color: #666;
}

.col-selected {
  background: #f2c811;
  color: #333;
  padding-left: 5px;
  border: 0;
}

.col-selected .col-type {
  color: #777;
}

.col-selected .col-filter {
  border-color: #fff;
}

.col-last {
  border: 0;
  padding-left: 5px;
}

.quality {
  height: 6px;
  background: #f3f2f1;
}

.quality span {
  border-right: 2px solid #fff;
}

.quality .teal {
  background: #01b8aa;
}

.quality .dark {
  background: #666;
  border-right-color: #666;
}

.row {
  height: 31.500px;
  box-sizing: border-box;
  line-height: 33px;
  font-size: 16px;
  color: #333;
}

.row span {
  box-sizing: border-box;
  background: #fff;
  border-right: 2px solid #e1e1e1;
  border-bottom: 2px solid #e1e1e1;
  padding: 0 4px;
  overflow: hidden;
}

.row .num {
  background: #f3f2f1;
  text-align: center;
  color: #666;
}

.row .n {
  text-align: right;
  font-style: italic;
  font-size: 16.500px;
  padding-right: 4px;
}

.row .shaded {
  background: #e6e6e6;
  border-right-color: #eee;
  border-bottom-color: #d6d6d6;
  padding-right: 3px;
  font-size: 16px;
}

.row .t:last-child {
  padding-left: 5px;
}

/* dialog */
.dialog {
  position: absolute;
  left: 41px;
  top: 346px;
  width: 1386px;
  height: 727px;
  box-sizing: border-box;
  background: #fff;
  border-radius: 11px;
  box-shadow: 0 0 2px 1px rgba(0, 0, 0, 0.35), 0 4px 40px rgba(0, 0, 0, 0.3);
  padding: 24px 45px 0 44px;
}

.dialog-close {
  position: absolute;
  top: 10px;
  right: 15px;
}

.dialog h1 {
  margin: 0;
  height: 48px;
  line-height: 48px;
  font-size: 28.600px;
  font-weight: 600;
  color: #333;
}

.intro {
  margin: 19px 0 0;
  height: 28px;
  line-height: 28px;
  font-size: 18.500px;
  color: #444;
}

.name-label {
  display: block;
  margin: 18px 0 0 -1px;
  height: 22px;
  line-height: 22px;
  font-size: 17px;
  color: #444;
}

.field {
  width: 258px;
  height: 33px;
  box-sizing: border-box;
  background: #fff;
  border: 2px solid #c4c4c4;
  padding-left: 7px;
  line-height: 29px;
  font-size: 16.800px;
  color: #222;
}

.name-field {
  margin: 4px 0 0 -1px;
  padding-left: 6px;
}

.clause-head {
  position: relative;
  margin: 29px 0 0;
  height: 22px;
  line-height: 22px;
  font-size: 17px;
  color: #444;
  display: flex;
}

.clause-head span {
  display: inline-flex;
  align-items: center;
  gap: 8px;
  white-space: nowrap;
}

.h-column { margin-left: 71px; width: 212px; }
.h-operator { width: 212px; }
.h-value { width: 398px; }

.clause {
  height: 48px;
  display: flex;
  align-items: center;
  box-sizing: border-box;
  border-left: 2px solid transparent;
  padding-left: 5px;
}

.clause-first {
  margin-left: -3px;
  margin-top: 3px;
}

.clause-hover {
  background: #e8e8e8;
  border-left-color: #f2c811;
}

.clause-label {
  width: 68px;
  box-sizing: border-box;
  font-size: 17px;
  color: #444;
}

.clause-first .clause-label {
  padding-left: 3px;
}

.select {
  width: 198px;
  height: 33px;
  box-sizing: border-box;
  background: #fff;
  border: 2px solid #a6a6a6;
  padding: 0 10px 0 7px;
  display: flex;
  align-items: center;
  justify-content: space-between;
  font-size: 16.800px;
  color: #444;
}

.select .caret,
.type-btn .caret {
  border-left-width: 5px;
  border-right-width: 5px;
  border-top-width: 5px;
  border-top-color: #777;
  margin-top: -2px;
}

.select.disabled {
  background: #e6e6e6;
  border-color: #c4c4c4;
}

.select-op {
  margin-left: 12px;
}

.type-btn {
  width: 56px;
  height: 33px;
  flex: none;
  box-sizing: border-box;
  background: #fff;
  border: 2px solid #c4c4c4;
  margin-left: 14px;
  padding: 0 8px 1px 1px;
  display: flex;
  align-items: center;
  justify-content: space-between;
}

.type-btn.disabled {
  background: #dcdcdc;
}

.clause .value {
  margin-left: 5px;
  flex: none;
}

.then {
  width: 49px;
  margin-left: 17px;
  font-size: 17px;
  color: #444;
}

.then + .type-btn {
  margin-left: 17px;
}

.more {
  display: flex;
  gap: 4px;
  margin-left: 23px;
}

.more i {
  width: 4px;
  height: 4px;
  border-radius: 50%;
  background: #444;
}

.btn {
  display: block;
  width: 90px;
  height: 33px;
  box-sizing: border-box;
  background: #fff;
  border: 2px solid #888;
  padding: 0;
  font-family: inherit;
  font-size: 15px;
  color: #444;
}

.add-clause {
  width: 108px;
  margin-top: 30px;
}

.else-label {
  margin-top: 42px;
  height: 22px;
  line-height: 22px;
  display: flex;
  align-items: center;
  gap: 7px;
  font-size: 17px;
  color: #444;
}

.else-row {
  display: flex;
  margin-top: 3px;
  margin-left: 1px;
}

.else-row .type-btn {
  margin-left: 0;
}

.else-row .value {
  margin-left: 4px;
}

.dialog-actions {
  display: flex;
  justify-content: flex-end;
  gap: 20px;
  margin-top: 45px;
}

.btn-ok {
  background: #f2c811;
  border-color: #f2c811;
  color: #333;
}

/* call-outs */
.mark {
  position: absolute;
  box-sizing: border-box;
  border: 5px solid #ed1c24;
}

.mark-tab { left: 270px; top: 34px; width: 146px; height: 48px; }
.mark-cond { left: 277px; top: 81px; width: 193px; height: 40px; }
.mark-title { left: 1287px; top: 274px; width: 101px; height: 50px; }
.mark-name { left: 73px; top: 472px; width: 279px; height: 82px; }
.mark-clauses { left: 61px; top: 561px; width: 1342px; height: 249px; }
.mark-else { left: 71px; top: 882px; width: 346px; height: 89px; }
.mark-ok { left: 1173px; top: 987px; width: 109px; height: 52px; }
```
